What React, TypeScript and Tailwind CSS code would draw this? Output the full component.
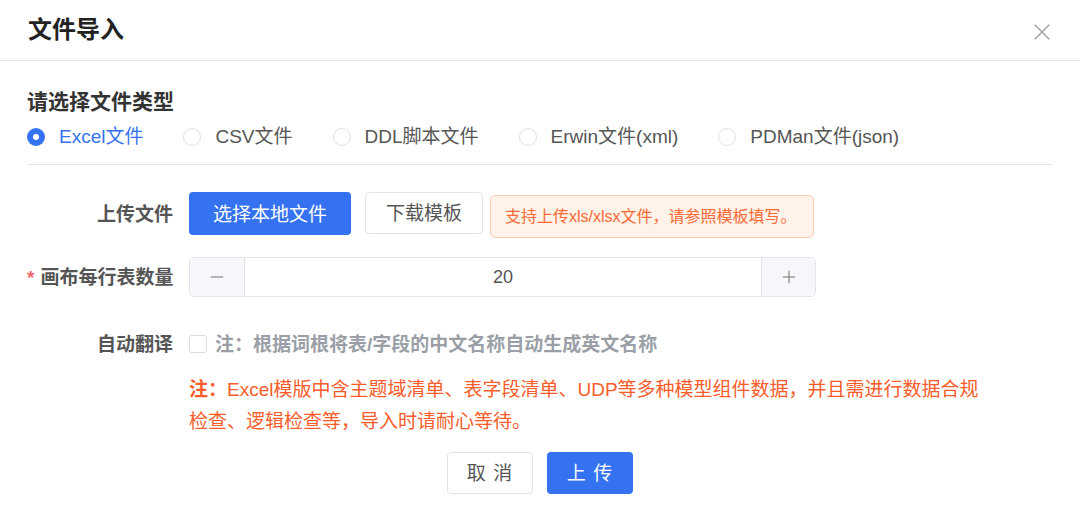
import { useState } from 'react'
import { X, Minus, Plus } from 'lucide-react'

const font = { fontFamily: '"Liberation Sans", "Noto Sans CJK SC", sans-serif' }

const types = [
  { key: 'excel', label: 'Excel文件' },
  { key: 'csv', label: 'CSV文件' },
  { key: 'ddl', label: 'DDL脚本文件' },
  { key: 'erwin', label: 'Erwin文件(xml)' },
  { key: 'pdman', label: 'PDMan文件(json)' },
]

export default function App() {
  const [type, setType] = useState('excel')
  const [count, setCount] = useState(20)
  const [translate, setTranslate] = useState(false)

  return (
    <div className="w-[1080px] h-[522px] bg-white overflow-hidden" style={font}>
      {/* 标题栏 */}
      <div className="h-[61px] flex items-center justify-between pl-[28px] pr-[24px] border-b border-[#e4e6eb]">
        <h1 className="text-[24px] font-bold text-[#222] leading-[32px]">文件导入</h1>
        <X className="w-[28px] h-[28px] mt-[4px] text-[#9a9a9a]" strokeWidth={1} />
      </div>

      <div className="px-[27px]">
        <h2 className="mt-[27px] text-[21px] font-bold text-[#333] leading-[28px]">请选择文件类型</h2>

        {/* 文件类型 */}
        <div className="flex items-center h-[30px] mt-[6px]">
          {types.map((t) => {
            const active = t.key === type
            return (
              <label
                key={t.key}
                onClick={() => setType(t.key)}
                className="flex items-center mr-[40px] cursor-pointer"
              >
                <span
                  className={`w-[18px] h-[18px] rounded-full flex items-center justify-center ${
                    active ? 'bg-[#3572f1]' : 'border border-[#dfe1ea] bg-white'
                  }`}
                >
                  {active && <span className="w-[6px] h-[6px] rounded-full bg-white" />}
                </span>
                <span className={`ml-[14px] text-[19px] ${active ? 'text-[#3572f1]' : 'text-[#555]'}`}>
                  {t.label}
                </span>
              </label>
            )
          })}
        </div>

        <div className="mt-[12px] border-t border-[#e4e6eb]" />

        {/* 上传文件 */}
        <div className="mt-[27px] flex items-start">
          <div className="w-[162px] h-[43px] pt-[3px] pr-[16px] flex items-center justify-end text-[19px] font-bold text-[#555]">
            上传文件
          </div>
          <button className="h-[43px] w-[162px] pt-[3px] rounded-[4px] bg-[#3572f1] text-white text-[19px]">选择本地文件</button>
          <button className="ml-[14px] h-[42px] w-[118px] pt-[3px] rounded-[4px] border border-[#e1e3e8] bg-white text-[#555] text-[19px]">
            下载模板
          </button>
          <div className="ml-[7px] mt-[3px] h-[43px] w-[324px] pl-[14px] flex items-center rounded-[5px] border border-[#ffc9b0] bg-[#fff2e9] text-[#fa6a35] text-[16px]">
            支持上传xls/xlsx文件，请参照模板填写。
          </div>
        </div>

        {/* 画布每行表数量 */}
        <div className="mt-[19px] flex items-center">
          <div className="w-[162px] pt-[3px] pr-[16px] text-right whitespace-nowrap text-[19px] font-bold text-[#555]">
            <span className="text-[#f56c6c] mr-[6px]">*</span>画布每行表数量
          </div>
          <div className="w-[627px] h-[40px] flex rounded-[5px] border border-[#e2e4ea] overflow-hidden">
            <button
              onClick={() => setCount((c) => c - 1)}
              className="w-[55px] flex items-center justify-center bg-[#f5f7fa] border-r border-[#e2e4ea] text-[#666]"
            >
              <Minus className="w-[20px] h-[20px]" strokeWidth={1.1} />
            </button>
            <div className="flex-1 flex items-center justify-center text-[18px] text-[#555]">{count}</div>
            <button
              onClick={() => setCount((c) => c + 1)}
              className="w-[54px] flex items-center justify-center bg-[#f5f7fa] border-l border-[#e2e4ea] text-[#666]"
            >
              <Plus className="w-[20px] h-[20px]" strokeWidth={1.1} />
            </button>
          </div>
        </div>

        {/* 自动翻译 */}
        <div className="mt-[32px] h-[30px] flex items-center">
          <div className="w-[162px] pt-[2px] pr-[16px] text-right text-[19px] font-bold text-[#555]">自动翻译</div>
          <span
            onClick={() => setTranslate(!translate)}
            className={`w-[18px] h-[18px] rounded-[3px] border ${
              translate ? 'bg-[#3572f1] border-[#3572f1]' : 'border-[#d8dbe2] bg-white'
            }`}
          />
          <span className="ml-[8px] pt-[2px] text-[19px] font-bold text-[#9a9ea6]">注：根据词根将表/字段的中文名称自动生成英文名称</span>
        </div>

        <p className="mt-[15px] ml-[162px] w-[830px] text-[19px] leading-[32px] text-[#fa5c2a]">
          <span className="font-bold">注：</span>
          Excel模版中含主题域清单、表字段清单、UDP等多种模型组件数据，并且需进行数据合规
          <br />
          检查、逻辑检查等，导入时请耐心等待。
        </p>

        <div className="mt-[14px] flex justify-center gap-[14px]">
          <button className="w-[86px] h-[42px] pt-[3px] rounded-[4px] border border-[#e1e3e8] bg-white text-[#555] text-[19px] tracking-[1px]">
            取 消
          </button>
          <button className="w-[86px] h-[42px] pt-[3px] rounded-[4px] bg-[#3572f1] text-white text-[19px] tracking-[1px]">
            上 传
          </button>
        </div>
      </div>
    </div>
  )
}
